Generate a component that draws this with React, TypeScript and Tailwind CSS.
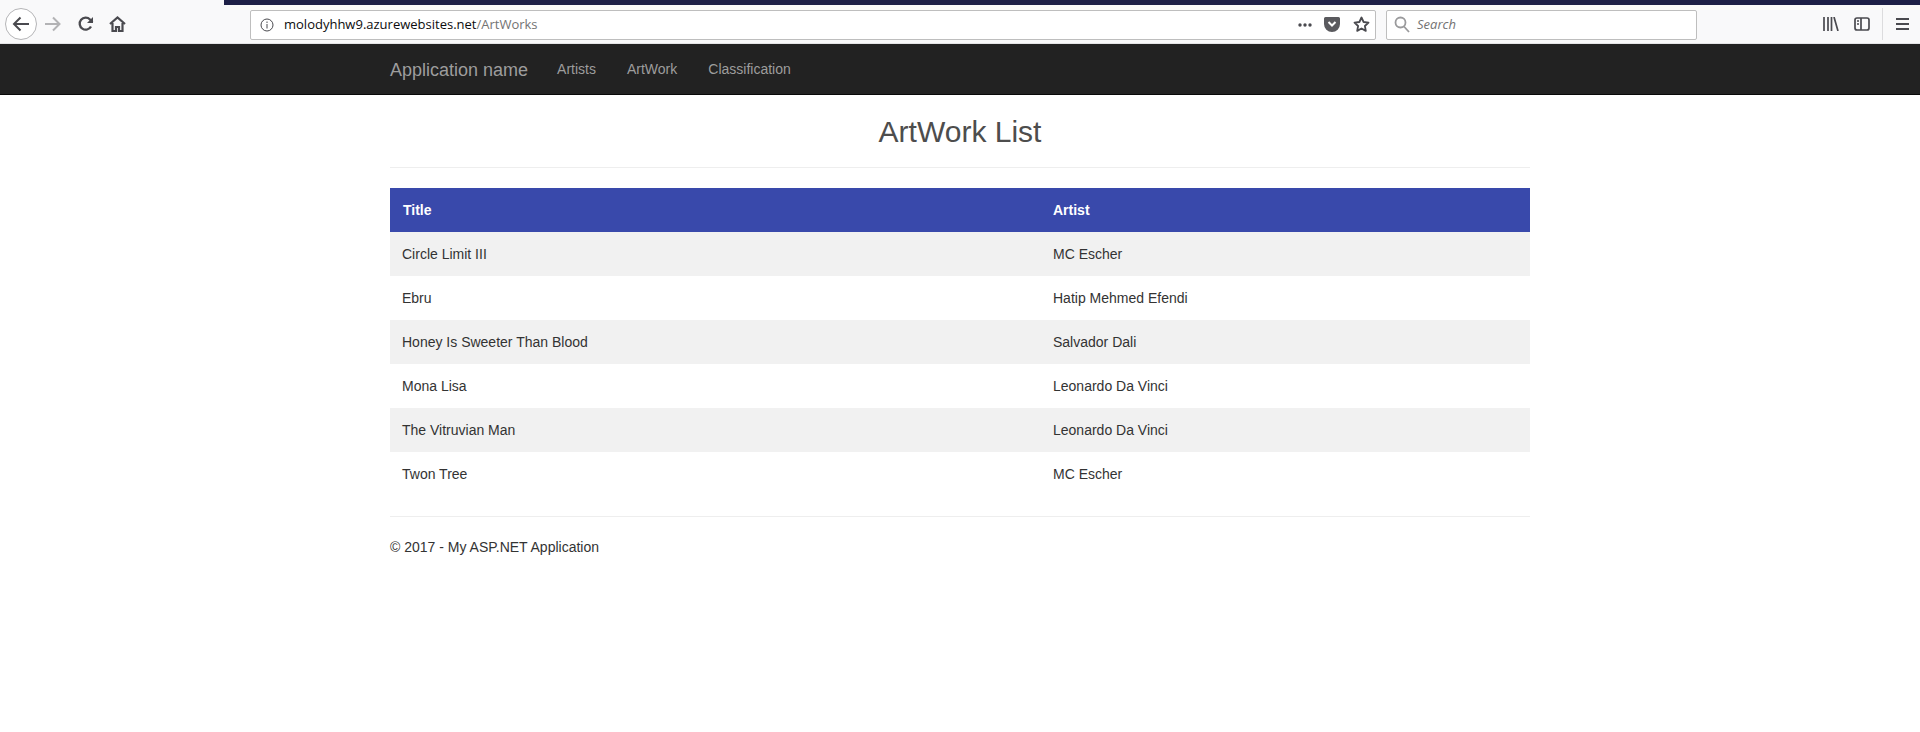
const rows = [
  ["Circle Limit III", "MC Escher"],
  ["Ebru", "Hatip Mehmed Efendi"],
  ["Honey Is Sweeter Than Blood", "Salvador Dali"],
  ["Mona Lisa", "Leonardo Da Vinci"],
  ["The Vitruvian Man", "Leonardo Da Vinci"],
  ["Twon Tree", "MC Escher"],
];

function BrowserToolbar() {
  return (
    <div className="h-[44px] bg-[#f9f9fa] border-b border-[#e4e4e6] font-['Open_Sans',sans-serif]">
      {/* window title strip */}
      <div className="pl-[224px] h-[5px]">
        <div className="h-full bg-[#1d1f47]" />
      </div>
      <div className="h-[38px] flex items-center">
        {/* back button */}
        <div className="ml-[5px] w-[32px] h-[32px] rounded-full border border-[#b5b5b7] bg-white flex items-center justify-center">
          <svg width="18" height="16" viewBox="0 0 18 16" fill="none" stroke="#4a4a4f" strokeWidth="2">
            <path d="M17 8H2M8.500 1.500 2 8l6.500 6.500" />
          </svg>
        </div>
        <svg className="ml-[8px]" width="16" height="16" viewBox="0 0 16 16" fill="none" stroke="#b3b3b5" strokeWidth="2">
          <path d="M0 8h14M8 1.500 14.500 8 8 14.500" />
        </svg>
        <svg className="ml-[17px]" width="16" height="16" viewBox="0 0 16 16" fill="none" stroke="#4a4a4f" strokeWidth="2.300">
          <path d="M13 10.500A6 6 0 1 1 12 3.500L14.500 6" />
          <path d="M15 1v6H9" fill="#4a4a4f" stroke="none" />
        </svg>
        <svg className="ml-[15px]" width="17" height="16" viewBox="0 0 17 16" fill="none" stroke="#4a4a4f" strokeWidth="2.200">
          <path d="M1 8 8.500 1.500 16 8M3.500 7v8h3.500v-4h3v4h3.500V7" />
        </svg>

        {/* address bar */}
        <div className="ml-[124px] mt-[1px] w-[1126px] h-[30px] bg-white border border-[#bebebe] rounded-[2px] flex items-center">
          <svg className="ml-[9px]" width="14" height="14" viewBox="0 0 14 14" fill="none" stroke="#4a4a4f" strokeWidth="1">
            <circle cx="7" cy="7" r="6" />
            <path d="M7 6v4.500M7 3.500v1.500" />
          </svg>
          <span className="ml-[10px] text-[13px] text-[#0c0c0d] whitespace-nowrap">
            molodyhhw9.azurewebsites.net<span className="text-[#737373]">/ArtWorks</span>
          </span>
          <div className="ml-auto flex items-center">
            <svg width="14" height="4" viewBox="0 0 14 4" fill="#4a4a4f">
              <circle cx="2" cy="2" r="1.700" />
              <circle cx="7" cy="2" r="1.700" />
              <circle cx="12" cy="2" r="1.700" />
            </svg>
            <svg className="ml-[12px]" width="16" height="15" viewBox="0 0 16 15">
              <path d="M1.500 0h13A1.500 1.500 0 0 1 16 1.500V7A8 8 0 0 1 0 7V1.500A1.500 1.500 0 0 1 1.500 0Z" fill="#5a5a5e" />
              <path d="M4.500 5 8 8.500 11.500 5" fill="none" stroke="#fff" strokeWidth="2" />
            </svg>
            <svg className="ml-[13px] mr-[5px]" width="17" height="17" viewBox="0 0 17 17" fill="none" stroke="#4a4a4f" strokeWidth="1.800" strokeLinejoin="round">
              <path d="m8.500 1.500 2.100 4.500 4.900.6-3.600 3.400.9 4.900-4.300-2.400-4.300 2.400.9-4.900L1.500 6.600 6.400 6Z" />
            </svg>
          </div>
        </div>

        {/* search bar */}
        <div className="ml-[10px] mt-[1px] w-[311px] h-[30px] bg-white border border-[#bebebe] rounded-[2px] flex items-center">
          <svg className="ml-[7px]" width="16" height="17" viewBox="0 0 16 17" fill="none" stroke="#9a9a9c" strokeWidth="1.800">
            <circle cx="6.500" cy="6.500" r="5" />
            <path d="m10 10.500 5 5.500" />
          </svg>
          <span className="ml-[7px] text-[13px] italic text-[#737373]">Search</span>
        </div>

        {/* library, sidebar, menu */}
        <svg className="ml-[126px]" width="16" height="14" viewBox="0 0 16 14" fill="none" stroke="#4a4a4f" strokeWidth="1.700">
          <path d="M1 0v14M5 0v14M8.500 0v14M11 0l4 14" />
        </svg>
        <svg className="ml-[15px]" width="16" height="14" viewBox="0 0 16 14" fill="none" stroke="#4a4a4f" strokeWidth="1.700">
          <rect x="1" y="1" width="14" height="12" rx="2" />
          <path d="M7 1v12M3 4h2M3 7h2" />
        </svg>
        <div className="ml-[12px] w-px h-[32px] bg-[#dcdcde]" />
        <svg className="ml-[13px]" width="13" height="12" viewBox="0 0 13 12" fill="none" stroke="#4a4a4f" strokeWidth="2">
          <path d="M0 1h13M0 6h13M0 11h13" />
        </svg>
      </div>
    </div>
  );
}

function Navbar() {
  return (
    <div className="h-[51px] bg-[#222222] border-b border-[#080808] text-[#9d9d9d]">
      <div className="w-[1140px] mx-auto flex items-center h-[50px]">
        <span className="text-[18px] pt-[2px]">Application name</span>
        <a className="ml-[29px] text-[14px]">Artists</a>
        <a className="ml-[31px] text-[14px]">ArtWork</a>
        <a className="ml-[31px] text-[14px]">Classification</a>
      </div>
    </div>
  );
}

export default function App() {
  return (
    <div className="min-h-screen bg-white text-[#333333] text-[14px] font-['Liberation_Sans',Arial,sans-serif]">
      <BrowserToolbar />
      <Navbar />

      <div className="w-[1140px] mx-auto">
        {/* Heading */}
        <h1 className="pt-[20px] pb-[10px] text-center text-[30px] leading-[33px] text-[#4d4d4d] border-b border-[#eeeeee] h-[73px]">
          ArtWork List
        </h1>

        {/* Table */}
        <table className="mt-[20px] w-full table-fixed border-collapse">
          <thead>
            <tr className="h-[44px] bg-[#3949ab] text-white font-bold text-left">
              <th className="w-[651px] pl-[13px]">Title</th>
              <th className="pl-[12px]">Artist</th>
            </tr>
          </thead>
          <tbody>
            {rows.map(([title, artist], i) => (
              <tr key={title} className={i % 2 === 0 ? "h-[44px] bg-[#f1f1f1]" : "h-[44px] bg-white"}>
                <td className="pl-[12px]">{title}</td>
                <td className="pl-[12px]">{artist}</td>
              </tr>
            ))}
          </tbody>
        </table>

        {/* Footer */}
        <div className="mt-[20px] pt-[20px] border-t border-[#eeeeee] leading-[20px]">
          © 2017 - My ASP.NET Application
        </div>
      </div>
    </div>
  );
}
